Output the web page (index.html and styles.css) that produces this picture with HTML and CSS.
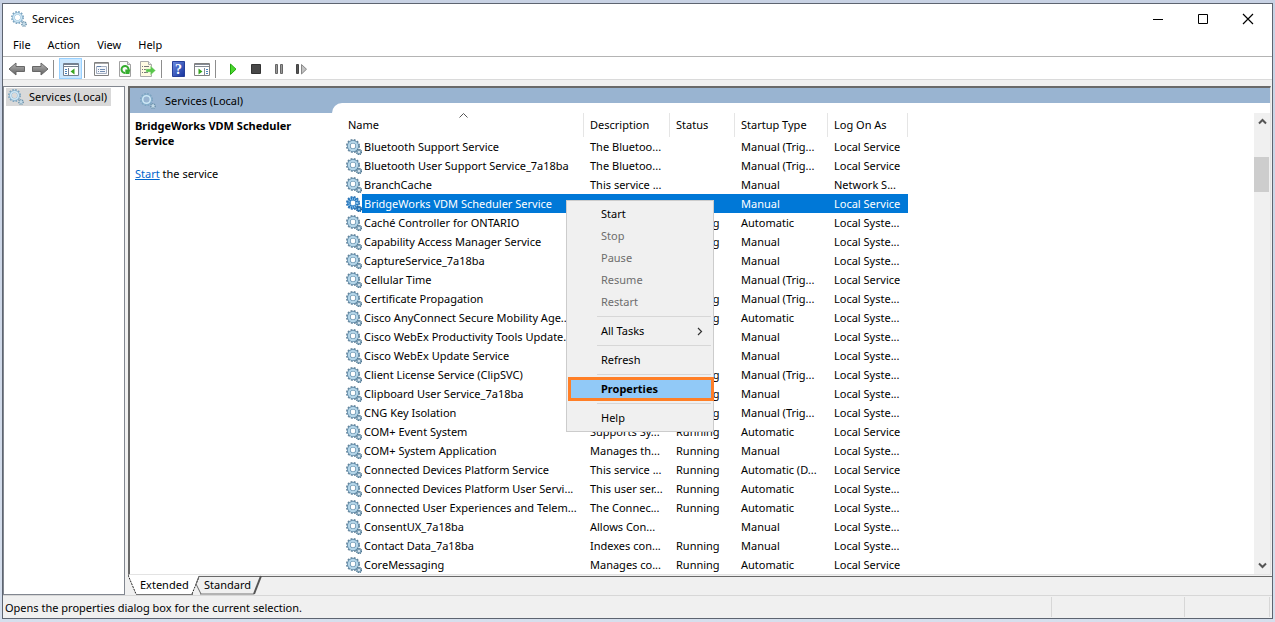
FILE: index.html
```html
<!DOCTYPE html>
<html lang="en">
<head>
<meta charset="utf-8">
<title>Services</title>
<link rel="stylesheet" href="styles.css">
</head>
<body>
<svg class="defs" aria-hidden="true">
  <defs>
    <linearGradient id="steel" x1="0" y1="0" x2="0" y2="1"><stop offset="0" stop-color="#b9b9b9"/><stop offset="1" stop-color="#5f5f5f"/></linearGradient>
    <linearGradient id="navy" x1="0" y1="0" x2="1" y2="1"><stop offset="0" stop-color="#6d8be0"/><stop offset="1" stop-color="#14329c"/></linearGradient>
    <symbol id="gear" viewBox="0 0 16 16">
      <circle cx="7" cy="7" r="6.200" fill="none" stroke="#64859c" stroke-width="1.600" stroke-dasharray="1.900 1.350"/>
      <circle cx="7" cy="7" r="4.200" fill="#fff" stroke="#5f8aa8" stroke-width="3.600"/>
      <circle cx="7" cy="7" r="4.100" fill="none" stroke="#b4d5e8" stroke-width="2.200"/>
      <circle cx="13" cy="13" r="2.500" fill="#8fb0c5" stroke="#4f7690" stroke-width="1.400" stroke-dasharray="1.200 .76"/>
      <circle cx="13" cy="13" r="1" fill="#e4f1f8"/>
    </symbol>
    <symbol id="gear-selected" viewBox="0 0 16 16">
      <circle cx="7" cy="7" r="6.200" fill="none" stroke="#2f74b3" stroke-width="1.600" stroke-dasharray="1.900 1.350"/>
      <circle cx="7" cy="7" r="4.200" fill="#fff" stroke="#1b70ba" stroke-width="3.600"/>
      <circle cx="7" cy="7" r="4.100" fill="none" stroke="#8fc3ea" stroke-width="2.600" stroke-dasharray="1 1"/>
      <circle cx="13" cy="13" r="2.500" fill="#2377bd" stroke="#245f91" stroke-width="1.400" stroke-dasharray="1.200 .76"/>
      <circle cx="13" cy="13" r="1" fill="#8fc3ea"/>
    </symbol>
    <symbol id="gear-light" viewBox="0 0 16 16">
      <circle cx="6.500" cy="6.500" r="5.700" fill="none" stroke="#7ba3bf" stroke-width="1.600" stroke-dasharray="1.700 1.280"/>
      <circle cx="6.500" cy="6.500" r="4" fill="none" stroke="#86b2cf" stroke-width="2.600"/>
      <circle cx="6.500" cy="6.500" r="3.800" fill="none" stroke="#cfe7f5" stroke-width="1.600"/>
      <circle cx="13" cy="13" r="2.200" fill="#c4dbe8" stroke="#688fa9" stroke-width="1.400" stroke-dasharray="1 .73"/>
    </symbol>
  </defs>
</svg>

<div class="window">
  <header class="titlebar">
    <svg class="icon"><use href="#gear-light"/></svg>
    <h1 class="title">Services</h1>
    <div class="caption">
      <button aria-label="Minimize"><svg width="12" height="12"><path d="M1 6.500h10" stroke="#000"/></svg></button>
      <button aria-label="Maximize"><svg width="12" height="12"><path d="M1.500 1.500h9v9h-9z" fill="none" stroke="#000"/></svg></button>
      <button aria-label="Close"><svg width="12" height="12"><path d="M1 1l10 10M11 1L1 11" stroke="#000" stroke-width="1.200"/></svg></button>
    </div>
  </header>

  <nav class="menubar">
    <button>File</button><button>Action</button><button>View</button><button>Help</button>
  </nav>

  <div class="toolbar">
    <button aria-label="Back"><svg width="18" height="16"><path d="M1 8l7-6v3.500h8.500v5H8V14z" fill="url(#steel)" stroke="#676767"/></svg></button>
    <button aria-label="Forward"><svg width="18" height="16"><path d="M17 8l-7-6v3.500H1.500v5H10V14z" fill="url(#steel)" stroke="#676767"/></svg></button>
    <i class="divider"></i>
    <button class="pressed" aria-label="Show or hide console tree"><svg width="16" height="16"><path d="M.5 2.500h15v12H.5z" fill="#fff" stroke="#75808f"/><path d="M1 3h14v1H1z" fill="#75808f"/><path d="M1 5.500h14M5.500 7v7" stroke="#75808f"/><path d="M2 8.500h2M2 10.500h2M2 12.500h2" stroke="#4a83bd"/><path d="M11.500 7.500v6L7.500 10.500z" fill="#37a51f"/></svg></button>
    <i class="divider"></i>
    <button aria-label="Properties"><svg width="16" height="16"><path d="M.5 1.500h14v13H.5z" fill="#fff" stroke="#808080"/><path d="M1 2.500h13" stroke="#a9a9a9"/><path d="M2.500 5.500h10v7h-10z" fill="#f4f6fa" stroke="#a5afc0"/><path d="M3 5.500h4" stroke="#607fa8"/><path d="M4 8.500h1M6 8.500h5M4 10.500h1M6 10.500h5" stroke="#718cb0"/></svg></button>
    <button aria-label="Refresh"><svg width="16" height="16"><path d="M2.500.5h8l3 3v12h-11z" fill="#fafafa" stroke="#a1a1a1"/><path d="M10.500.5v3h3" fill="#e1e1e1" stroke="#a1a1a1"/><path d="M8 12A3.500 3.500 0 1 1 11.500 9" fill="none" stroke="#35ad2e" stroke-width="2"/><path d="M8.300 8.500h5l-1 4.500h-4z" fill="#35ad2e"/></svg></button>
    <button aria-label="Export list"><svg width="17" height="16"><path d="M1.500.5h8l3 3v12h-11z" fill="#fffbe2" stroke="#ababab"/><path d="M9.500.5v3h3" fill="#eee" stroke="#ababab"/><path d="M3 5.500h1M5 5.500h5M3 8.500h1M5 8.500h4M3 11.500h1M5 11.500h4" stroke="#777"/><path d="M7 8h4.500V5l5 4.500-5 4.500v-3H7z" fill="#58c64a" stroke="#b9e7b0" stroke-width=".5"/></svg></button>
    <i class="divider"></i>
    <button aria-label="Help"><svg width="14" height="16"><path d="M.5.5h12v15H.5z" fill="url(#navy)" stroke="#263f99"/><text x="6.500" y="13" class="question">?</text></svg></button>
    <button aria-label="Show or hide action pane"><svg width="16" height="16"><path d="M.5 2.500h15v12H.5z" fill="#fff" stroke="#808080"/><path d="M1 3h14v1H1z" fill="#858b95"/><path d="M1 5.500h14M10.500 7v7" stroke="#858b95"/><path d="M12 8.500h2M12 10.500h2M12 12.500h2" stroke="#4a83bd"/><path d="M4.500 7.500v6l4-3z" fill="#37a51f"/></svg></button>
    <i class="divider"></i>
    <button aria-label="Start service"><svg width="16" height="16"><path d="M5.500 3v10.500L11 8.200z" fill="#4bd72e" stroke="#20a80d"/></svg></button>
    <button aria-label="Stop service"><svg width="16" height="16"><path d="M3.500 3.500h9v9h-9z" fill="#484848" stroke="#333"/></svg></button>
    <button aria-label="Pause service"><svg width="16" height="16"><path d="M4.500 3.500h2v9h-2zM9.500 3.500h2v9h-2z" fill="#999" stroke="#666"/></svg></button>
    <button aria-label="Restart service"><svg width="16" height="16"><path d="M2.500 3.500h2v9h-2z" fill="#555" stroke="#444"/><path d="M7.500 3.500v9.500l5-4.800z" fill="#c2c2c2" stroke="#888"/></svg></button>
  </div>

  <main class="workspace">
    <aside class="tree">
      <button class="tree-item"><svg class="icon"><use href="#gear-light"/></svg><span>Services (Local)</span></button>
    </aside>

    <section class="pane">
      <div class="view">
        <div class="banner"><svg class="icon"><use href="#gear-light"/></svg><h2>Services (Local)</h2></div>
        <div class="details">
          <h3>BridgeWorks VDM Scheduler Service</h3>
          <p><a href="#start">Start</a> the service</p>
        </div>
        <div class="list">
          <table class="services">
            <colgroup><col class="c-name"><col class="c-desc"><col class="c-status"><col class="c-type"><col class="c-logon"></colgroup>
            <thead>
              <tr><th>Name<svg class="sort" width="9" height="5"><path d="M.5 4.500l4-4 4 4" fill="none" stroke="#555"/></svg></th><th>Description</th><th>Status</th><th>Startup Type</th><th>Log On As</th></tr>
            </thead>
            <tbody>
              <tr><td><div class="name"><svg class="icon"><use href="#gear"/></svg><span>Bluetooth Support Service</span></div></td><td>The Bluetoo...</td><td></td><td>Manual (Trig...</td><td>Local Service</td></tr>
              <tr><td><div class="name"><svg class="icon"><use href="#gear"/></svg><span>Bluetooth User Support Service_7a18ba</span></div></td><td>The Bluetoo...</td><td></td><td>Manual (Trig...</td><td>Local Service</td></tr>
              <tr><td><div class="name"><svg class="icon"><use href="#gear"/></svg><span>BranchCache</span></div></td><td>This service ...</td><td></td><td>Manual</td><td>Network S...</td></tr>
              <tr class="selected"><td><div class="name"><svg class="icon"><use href="#gear-selected"/></svg><span>BridgeWorks VDM Scheduler Service</span></div></td><td></td><td></td><td>Manual</td><td>Local Service</td></tr>
              <tr><td><div class="name"><svg class="icon"><use href="#gear"/></svg><span>Caché Controller for ONTARIO</span></div></td><td></td><td>Running</td><td>Automatic</td><td>Local Syste...</td></tr>
              <tr><td><div class="name"><svg class="icon"><use href="#gear"/></svg><span>Capability Access Manager Service</span></div></td><td></td><td>Running</td><td>Manual</td><td>Local Syste...</td></tr>
              <tr><td><div class="name"><svg class="icon"><use href="#gear"/></svg><span>CaptureService_7a18ba</span></div></td><td></td><td></td><td>Manual</td><td>Local Syste...</td></tr>
              <tr><td><div class="name"><svg class="icon"><use href="#gear"/></svg><span>Cellular Time</span></div></td><td></td><td></td><td>Manual (Trig...</td><td>Local Service</td></tr>
              <tr><td><div class="name"><svg class="icon"><use href="#gear"/></svg><span>Certificate Propagation</span></div></td><td></td><td>Running</td><td>Manual (Trig...</td><td>Local Syste...</td></tr>
              <tr><td><div class="name"><svg class="icon"><use href="#gear"/></svg><span>Cisco AnyConnect Secure Mobility Age...</span></div></td><td></td><td>Running</td><td>Automatic</td><td>Local Syste...</td></tr>
              <tr><td><div class="name"><svg class="icon"><use href="#gear"/></svg><span>Cisco WebEx Productivity Tools Update...</span></div></td><td></td><td></td><td>Manual</td><td>Local Syste...</td></tr>
              <tr><td><div class="name"><svg class="icon"><use href="#gear"/></svg><span>Cisco WebEx Update Service</span></div></td><td></td><td></td><td>Manual</td><td>Local Syste...</td></tr>
              <tr><td><div class="name"><svg class="icon"><use href="#gear"/></svg><span>Client License Service (ClipSVC)</span></div></td><td></td><td>Running</td><td>Manual (Trig...</td><td>Local Syste...</td></tr>
              <tr><td><div class="name"><svg class="icon"><use href="#gear"/></svg><span>Clipboard User Service_7a18ba</span></div></td><td></td><td>Running</td><td>Manual</td><td>Local Syste...</td></tr>
              <tr><td><div class="name"><svg class="icon"><use href="#gear"/></svg><span>CNG Key Isolation</span></div></td><td></td><td>Running</td><td>Manual (Trig...</td><td>Local Syste...</td></tr>
              <tr><td><div class="name"><svg class="icon"><use href="#gear"/></svg><span>COM+ Event System</span></div></td><td>Supports Sy...</td><td>Running</td><td>Automatic</td><td>Local Service</td></tr>
              <tr><td><div class="name"><svg class="icon"><use href="#gear"/></svg><span>COM+ System Application</span></div></td><td>Manages th...</td><td>Running</td><td>Manual</td><td>Local Syste...</td></tr>
              <tr><td><div class="name"><svg class="icon"><use href="#gear"/></svg><span>Connected Devices Platform Service</span></div></td><td>This service ...</td><td>Running</td><td>Automatic (D...</td><td>Local Service</td></tr>
              <tr><td><div class="name"><svg class="icon"><use href="#gear"/></svg><span>Connected Devices Platform User Servi...</span></div></td><td>This user ser...</td><td>Running</td><td>Automatic</td><td>Local Syste...</td></tr>
              <tr><td><div class="name"><svg class="icon"><use href="#gear"/></svg><span>Connected User Experiences and Telem...</span></div></td><td>The Connec...</td><td>Running</td><td>Automatic</td><td>Local Syste...</td></tr>
              <tr><td><div class="name"><svg class="icon"><use href="#gear"/></svg><span>ConsentUX_7a18ba</span></div></td><td>Allows Con...</td><td></td><td>Manual</td><td>Local Syste...</td></tr>
              <tr><td><div class="name"><svg class="icon"><use href="#gear"/></svg><span>Contact Data_7a18ba</span></div></td><td>Indexes con...</td><td>Running</td><td>Manual</td><td>Local Syste...</td></tr>
              <tr><td><div class="name"><svg class="icon"><use href="#gear"/></svg><span>CoreMessaging</span></div></td><td>Manages co...</td><td>Running</td><td>Automatic</td><td>Local Service</td></tr>
            </tbody>
          </table>
          <div class="scrollbar">
            <button aria-label="Scroll up"><svg width="9" height="7"><path d="M1 5.500l3.500-3.500L8 5.500" fill="none" stroke="#555" stroke-width="2"/></svg></button>
            <div class="track"><div class="thumb"></div></div>
            <button aria-label="Scroll down"><svg width="9" height="7"><path d="M1 1.500L4.500 5 8 1.500" fill="none" stroke="#555" stroke-width="2"/></svg></button>
          </div>
        </div>
      </div>
      <div class="tabs">
        <svg class="tab-shape" width="136" height="20">
          <path d="M0 0L8 19H65L71 1V0z" fill="#fff"/>
          <path d="M0 0L8 19" fill="none" stroke="#222" stroke-dasharray="2 1"/>
          <path d="M8 19.500H65" stroke="#777"/>
          <path d="M64 19L71 2" stroke="#222" stroke-dasharray="2 1"/>
          <path d="M71 1L68 9L73 19" fill="none" stroke="#666"/>
          <path d="M72 19H126" stroke="#777"/>
          <path d="M126 19L133 1" stroke="#555" stroke-width="2"/>
        </svg>
        <button class="tab">Extended</button><button class="tab tab-last">Standard</button>
        <i class="tab-rule"></i>
      </div>
    </section>
  </main>

  <footer class="status"><span class="message">Opens the properties dialog box for the current selection.</span><span class="cell"></span><span class="cell cell-end"></span></footer>

  <div class="context" role="menu">
    <button role="menuitem">Start</button>
    <button role="menuitem" disabled>Stop</button>
    <button role="menuitem" disabled>Pause</button>
    <button role="menuitem" disabled>Resume</button>
    <button role="menuitem" disabled>Restart</button>
    <hr>
    <button role="menuitem">All Tasks<svg width="6" height="9"><path d="M1 1l3.500 3.500L1 8" fill="none" stroke="#333" stroke-width="1.200"/></svg></button>
    <hr>
    <button role="menuitem">Refresh</button>
    <hr>
    <button role="menuitem" class="current">Properties</button>
    <hr>
    <button role="menuitem">Help</button>
  </div>
</div>
</body>
</html>
```
FILE: styles.css
```css
* { box-sizing: border-box; }

html, body { height: 100%; margin: 0; }

body {
  display: flex;
  padding: 3px 2px;
  background: linear-gradient(#c8d2e4, #d6dfed);
  color: #000;
  font: 11px/16px "Noto Sans", "Open Sans", sans-serif;
  overflow: hidden;
}

button {
  margin: 0;
  padding: 0;
  border: 0;
  background: none;
  color: inherit;
  font: inherit;
  text-align: left;
}

h1, h2, h3, p { margin: 0; font-size: inherit; font-weight: 400; }
svg { display: block; flex: none; }
.defs { position: absolute; width: 0; height: 0; }
.icon { width: 16px; height: 16px; }

.window {
  position: relative;
  flex: 1;
  display: flex;
  flex-direction: column;
  min-width: 0;
  border: 1px solid #5d6470;
  background: #f0f0f0;
}

.titlebar { display: flex; align-items: center; height: 29px; padding-left: 8px; background: #fff; }
.title { flex: 1; padding-left: 5px; }
.caption { display: flex; padding-right: 2px; }
.caption button { display: grid; place-items: center; width: 45px; height: 28px; }

.menubar {
  display: flex;
  gap: 17px;
  height: 24px;
  padding: 0 10px;
  align-items: center;
  border-bottom: 1px solid #b4b4b4;
  background: #fff;
}

.toolbar {
  display: flex;
  align-items: center;
  height: 23px;
  padding: 1px 0 0 2px;
  border-bottom: 1px solid #dadada;
  background: #fff;
}
.toolbar button { display: grid; place-items: center; width: 23px; height: 21px; }
.toolbar .pressed { background: #cce8ff; border: 1px solid #99d1ff; }
.divider { width: 1px; height: 18px; margin: 0 5px 0 2px; background: #8d8d8d; }
.question { fill: #fff; font: bold 14px "Liberation Serif", serif; text-anchor: middle; }

.workspace { flex: 1; display: flex; gap: 3px; min-height: 0; padding-top: 6px; }

.tree { width: 122px; border: 1px solid #828790; background: #fff; }
.tree-item {
  display: flex;
  align-items: center;
  height: 18px;
  margin: 1px 0 0 2px;
  padding: 0 4px 0 2px;
  gap: 5px;
  background: #d9d9d9;
  white-space: nowrap;
}

.pane { flex: 1; display: flex; flex-direction: column; min-width: 0; }

.view {
  flex: 1;
  display: grid;
  grid-template: 15px 10px 1fr / 202px 1fr;
  min-height: 0;
  margin-right: 1px;
  border: solid;
  border-width: 2px 1px 1px 2px;
  border-color: #696969 #e3e3e3 #e3e3e3 #696969;
  background: #fff;
}
.banner {
  grid-area: 1 / 1 / 3 / 3;
  display: flex;
  align-items: center;
  gap: 9px;
  padding-left: 10px;
  background: #99b4d1;
}
.details { grid-area: 3 / 1; padding: 5px; line-height: 15px; }
.details h3 { font-weight: 700; }
.details p { margin-top: 18px; }
.details a { color: #0066cc; }

.list {
  grid-area: 2 / 2 / 4 / 3;
  display: flex;
  justify-content: space-between;
  min-height: 0;
  padding-left: 14px;
  border-top-left-radius: 10px;
  background: #fff;
}

.services { align-self: flex-start; width: 562px; table-layout: fixed; border-spacing: 0; white-space: nowrap; }
.c-name { width: 238px; }
.c-desc { width: 86px; }
.c-status { width: 65px; }
.c-type { width: 93px; }
.c-logon { width: 80px; }
.services th {
  position: relative;
  height: 34px;
  padding: 10px 0 0 6px;
  background: linear-gradient(#e5e5e5, #e5e5e5) right bottom / 1px 24px no-repeat;
  font-weight: 400;
  text-align: left;
}
.services th:first-child { padding-left: 2px; }
.sort { position: absolute; top: 10px; left: 113px; }
.services td { height: 19px; padding: 0 0 0 6px; line-height: 19px; }
.services td:first-child { padding: 0; }
.name { display: flex; align-items: center; }
.name span { flex: 1; padding-left: 2px; }
.selected td:not(:first-child), .selected .name span { background: #0078d7; color: #fff; }

.scrollbar { display: flex; flex-direction: column; width: 16px; margin-top: 10px; background: #f0f0f0; }
.scrollbar button { display: grid; place-items: center; height: 17px; }
.track { flex: 1; padding: 27px 1px 0 0; }
.thumb { height: 35px; background: #cdcdcd; }

.tabs { position: relative; display: flex; height: 20px; }
.tab-shape { position: absolute; top: 0; left: 0; }
.tab { position: relative; width: 70px; padding-left: 12px; }
.tab-last { padding-left: 6px; }
.tab-rule { flex: 1; height: 2px; border-bottom: 1px solid #696969; margin-left: -70px; }

.status { display: flex; align-items: stretch; height: 23px; padding: 1px 2px; border-top: 1px solid #d7d7d7; }
.message { flex: 1; padding-top: 3px; }
.cell { width: 133px; border-left: 1px solid #d7d7d7; }
.cell-end { width: 86px; border-right: 1px solid #d7d7d7; }

.context {
  position: absolute;
  top: 196px;
  left: 563px;
  display: flex;
  flex-direction: column;
  width: 148px;
  padding: 2px 0 2px 2px;
  border: 1px solid #ccc;
  background: #f0f0f0;
}
.context button { display: flex; align-items: center; justify-content: space-between; height: 22px; padding: 0 10px 0 32px; }
.context button:disabled { color: #6d6d6d; }
.context hr { width: 114px; height: 1px; margin: 3px 0 3px 28px; border: 0; background: #d7d7d7; }
.context .current { background: #91c9f7; outline: 3px solid #ff7f27; outline-offset: -2px; font-weight: 700; }
```
